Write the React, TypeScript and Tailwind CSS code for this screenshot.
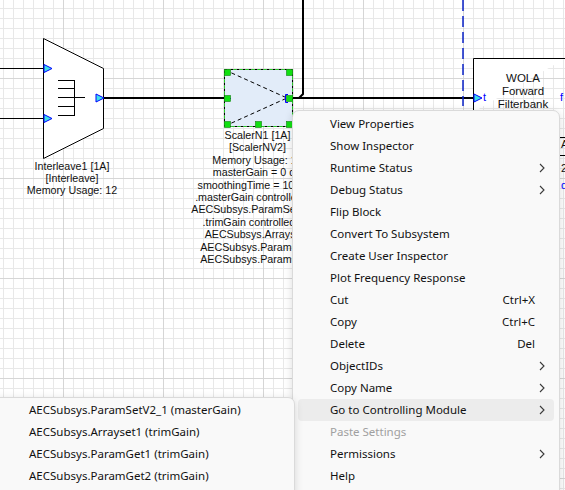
import { ReactNode } from "react";

type MenuItem = {
    label: string;
    shortcut?: string;
    sub?: boolean;
    disabled?: boolean;
    active?: boolean;
};

const menuItems: MenuItem[] = [
    { label: "View Properties" },
    { label: "Show Inspector" },
    { label: "Runtime Status", sub: true },
    { label: "Debug Status", sub: true },
    { label: "Flip Block" },
    { label: "Convert To Subsystem" },
    { label: "Create User Inspector" },
    { label: "Plot Frequency Response" },
    { label: "Cut", shortcut: "Ctrl+X" },
    { label: "Copy", shortcut: "Ctrl+C" },
    { label: "Delete", shortcut: "Del" },
    { label: "ObjectIDs", sub: true },
    { label: "Copy Name", sub: true },
    { label: "Go to Controlling Module", sub: true, active: true },
    { label: "Paste Settings", disabled: true },
    { label: "Permissions", sub: true },
    { label: "Help" },
];

const subItems = [
    "AECSubsys.ParamSetV2_1 (masterGain)",
    "AECSubsys.Arrayset1 (trimGain)",
    "AECSubsys.ParamGet1 (trimGain)",
    "AECSubsys.ParamGet2 (trimGain)",
];

const scalerLines = [
    "ScalerN1 [1A]",
    "[ScalerNV2]",
    "Memory Usage: 16",
    "masterGain = 0 dB",
    "smoothingTime = 100 ms",
    ".masterGain controlled by:",
    "AECSubsys.ParamSetV2_1",
    ".trimGain controlled by:",
    "AECSubsys.Arrayset1",
    "AECSubsys.ParamGet1",
    "AECSubsys.ParamGet2",
];

function Chevron() {
    return (
        <svg width="6" height="10" viewBox="0 0 6 10">
            <path d="M1 1l4 4-4 4" fill="none" stroke="#3a3a3a" strokeWidth="1.1" />
        </svg>
    );
}

function Port({ x, y }: { x: number; y: number }) {
    return (
        <path
            d={`M${x} ${y - 4} L${x + 8} ${y} L${x} ${y + 4} Z`}
            fill="#3ee0ea"
            stroke="#0000ff"
            strokeWidth="1"
        />
    );
}

function Label({ cx, top, leading, children }: { cx: number; top: number; leading: string; children: ReactNode }) {
    return (
        <div
            className={`absolute w-[220px] flex flex-col items-center whitespace-nowrap text-[#111] font-['Liberation_Sans',Arial,sans-serif] text-[10.7px] ${leading}`}
            style={{ left: cx - 110, top }}
        >
            {children}
        </div>
    );
}

function Canvas() {
    const majorX = [63.5, 163.5, 263.5, 363.5, 463.5];
    const majorY = [78.5, 178.5, 278.5, 378.5, 478.5];
    const handles: [number, number][] = [
        [224, 69], [286, 69], [224, 95], [286, 95], [224, 121], [255, 121], [286, 121],
    ];

    return (
        <svg className="absolute inset-0" width="565" height="490">
            <defs>
                <pattern id="minor" width="10" height="10" patternUnits="userSpaceOnUse" x="3" y="8">
                    <path d="M0 0.5H10M0.5 0V10" fill="none" stroke="#e8e8e8" strokeWidth="1" />
                </pattern>
            </defs>
            <rect width="565" height="490" fill="#fff" />
            <rect width="565" height="490" fill="url(#minor)" />
            {majorX.map((x) => (
                <line key={`x${x}`} x1={x} y1="0" x2={x} y2="490" stroke="#d6d6d6" />
            ))}
            {majorY.map((y) => (
                <line key={`y${y}`} x1="0" y1={y} x2="565" y2={y} stroke="#d6d6d6" />
            ))}

            {/* interleave inputs */}
            <line x1="0" y1="68.5" x2="43" y2="68.5" stroke="#000" />
            <line x1="0" y1="118.5" x2="43" y2="118.5" stroke="#000" />

            {/* interleave block */}
            <path d="M43.5 38.5 L103.5 68.5 L103.5 128.5 L43.5 158.5 Z" fill="#fff" stroke="#000" />
            <path d="M58 80.5H74.5M58 88.5H74.5M58 97.5H74.5M58 106.5H74.5M58 115.5H74.5M74.5 80V116M74.5 97.5H85" fill="none" stroke="#000" />
            <Port x={44} y={68.5} />
            <Port x={44} y={118.5} />
            <Port x={96} y={98} />

            {/* wires */}
            <line x1="104" y1="98" x2="224" y2="98" stroke="#000" strokeWidth="2" />
            <path d="M293 98 H473" stroke="#000" strokeWidth="2" fill="none" />
            <path d="M303 0 V94 L299 98" stroke="#000" strokeWidth="2" fill="none" />
            <line x1="463" y1="0" x2="463" y2="106" stroke="#0a22c8" strokeWidth="1.5" strokeDasharray="11 5" />

            {/* scaler block */}
            <rect x="224.5" y="69.5" width="68" height="57" fill="#e2ecf9" />
            <path d="M225 70 L287 98 M225 126 L287 98" stroke="#000" strokeWidth="1" strokeDasharray="4 3" fill="none" />
            <rect x="224.5" y="69.5" width="68" height="57" fill="none" stroke="#000" strokeDasharray="3 3" />
            <rect x="224.5" y="69.5" width="68" height="57" fill="none" stroke="#22cc22" strokeDasharray="3 3" strokeDashoffset="3" />
            <path d="M228 98.5H231" stroke="#0000ff" />
            <path d="M288 94.5H285.5V102.5H288" stroke="#0000ff" fill="none" />
            {handles.map(([x, y]) => (
                <rect key={`${x}-${y}`} x={x + 0.5} y={y + 0.5} width="6" height="6" fill="#11e011" stroke="#108010" strokeWidth="0.6" />
            ))}

            {/* WOLA block */}
            <path d="M473.5 112 V58.5 H565" stroke="#000" fill="#fff" />
            <Port x={474} y={98} />

            {/* clipped block at right edge */}
            <line x1="560" y1="137.5" x2="565" y2="137.5" stroke="#000" />
            <line x1="560" y1="155.5" x2="565" y2="155.5" stroke="#000" />
        </svg>
    );
}

function ContextMenu() {
    return (
        <div className="absolute left-[292px] top-[110px] w-[268px] h-[400px] bg-[#f9f9f9] border border-[#dadada] rounded-[7px] shadow-[0_2px_8px_rgba(0,0,0,0.14)] pt-[2px] px-[5px] flex flex-col font-['Noto_Sans',sans-serif] text-[11.5px]">
            {menuItems.map((item) => (
                <div
                    key={item.label}
                    className={`h-[22px] flex items-center rounded-[4px] pl-[32px] pr-[9px] ${item.active ? "bg-[#ececec]" : ""} ${item.disabled ? "text-[#a0a0a0]" : "text-[#111]"}`}
                >
                    <span className="flex-1 whitespace-nowrap">{item.label}</span>
                    {item.shortcut && <span className="whitespace-nowrap">{item.shortcut}</span>}
                    <span className="w-[10px] flex justify-end">{item.sub && <Chevron />}</span>
                </div>
            ))}
        </div>
    );
}

function SubMenu() {
    return (
        <div className="absolute left-[-10px] top-[397px] w-[305px] h-[110px] bg-[#f9f9f9] border border-[#dadada] rounded-[7px] shadow-[0_2px_8px_rgba(0,0,0,0.14)] pt-[1px] flex flex-col font-['Noto_Sans',sans-serif] text-[11.5px] text-[#111]">
            {subItems.map((s) => (
                <div key={s} className="h-[22px] flex items-center pl-[38px] whitespace-nowrap">
                    {s}
                </div>
            ))}
        </div>
    );
}

export default function App() {
    return (
        <div className="relative w-[565px] h-[490px] overflow-hidden bg-white">
            <Canvas />

            <Label cx={72} top={160} leading="leading-[12px]">
                <div>Interleave1 [1A]</div>
                <div>[Interleave]</div>
                <div>Memory Usage: 12</div>
            </Label>

            <Label cx={257.5} top={129} leading="leading-[12.4px]">
                {scalerLines.map((l) => (
                    <div key={l}>{l}</div>
                ))}
            </Label>

            {/* WOLA block labels */}
            <div className="absolute left-[463px] top-[72px] w-[120px] flex flex-col items-center font-['Liberation_Sans',Arial,sans-serif] text-[11.5px] leading-[13px] text-[#111]">
                <div>WOLA</div>
                <div>Forward</div>
                <div>Filterbank</div>
            </div>
            <div className="absolute left-[483px] top-[89px] font-['Liberation_Sans',Arial,sans-serif] text-[11px] text-[#0000ff]">t</div>
            <div className="absolute left-[560px] top-[89px] font-['Liberation_Sans',Arial,sans-serif] text-[11px] text-[#0000ff]">f</div>

            {/* block cut off at the right edge */}
            <div className="absolute left-[561px] top-[138px] flex flex-col font-['Liberation_Sans',Arial,sans-serif] text-[11px] leading-[13px] text-[#111]">
                <div>A</div>
                <div className="mt-[11px]">2</div>
                <div className="mt-[4px] text-[#0000ff]">d</div>
            </div>

            <ContextMenu />
            <SubMenu />
        </div>
    );
}
